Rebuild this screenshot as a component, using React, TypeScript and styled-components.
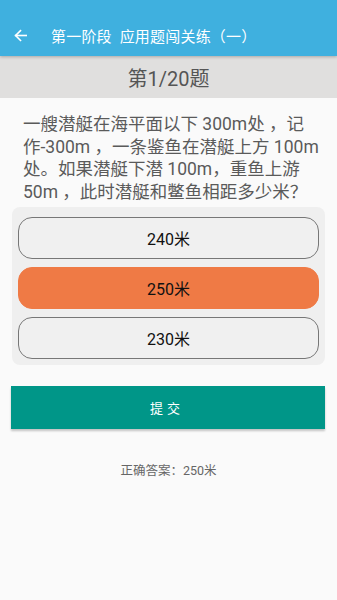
import React from "react";
import styled, { createGlobalStyle } from "styled-components";

const GlobalStyle = createGlobalStyle`
  html, body {
    margin: 0;
    padding: 0;
    background: #fafafa;
  }
  body {
    font-family: Roboto, "Noto Sans CJK SC", "Noto Sans", sans-serif;
  }
`;

const Page = styled.div`
  width: 337px;
  min-height: 600px;
  background: #fafafa;
  display: flex;
  flex-direction: column;
`;

const AppBar = styled.header`
  height: 56px;
  padding-top: 15px;
  box-sizing: border-box;
  background: #3fb0df;
  display: flex;
  align-items: center;
  color: #fff;
  position: relative;
  z-index: 1;
  box-shadow: 0 1px 3px rgba(0, 0, 0, 0.25);
`;

const BackButton = styled.button`
  width: 40px;
  height: 32px;
  margin-left: 0;
  border: 0;
  padding: 0;
  background: transparent;
  display: flex;
  align-items: center;
  justify-content: center;
  color: #fff;
`;

const Title = styled.h1`
  margin: 0 0 0 11px;
  font-size: 15px;
  font-weight: 400;
  letter-spacing: 0.2px;
`;

const CounterBand = styled.div`
  height: 42px;
  background: #e0dfde;
  display: flex;
  align-items: center;
  justify-content: center;
  font-size: 20px;
  color: #555;
`;

const Question = styled.p`
  margin: 0;
  padding: 15px 10px 0 23px;
  font-size: 17.5px;
  line-height: 22.5px;
  color: #5a5a5a;
  white-space: nowrap;
`;

const OptionCard = styled.div`
  margin: 4px 12px 0 12px;
  padding: 10px 6px 6px 6px;
  background: #efefef;
  border-radius: 8px;
  display: flex;
  flex-direction: column;
  gap: 8px;
`;

const Option = styled.button<{ $selected?: boolean }>`
  height: 42px;
  box-sizing: border-box;
  border-radius: 14px;
  border: 1px solid ${(p) => (p.$selected ? "#ef7a45" : "#777")};
  background: ${(p) => (p.$selected ? "#ef7a45" : "#f0f0f0")};
  color: #111;
  font-family: inherit;
  font-size: 16px;
  display: flex;
  align-items: center;
  justify-content: center;
  padding: 0;
`;

const SubmitButton = styled.button`
  margin: 21px 12px 0 11px;
  height: 43px;
  border: 0;
  background: #009688;
  color: #fff;
  font-family: inherit;
  font-size: 13px;
  letter-spacing: 4px;
  padding-left: 4px;
  box-shadow: 0 2px 2px rgba(0, 0, 0, 0.22);
`;

const Answer = styled.div`
  margin-top: 31px;
  text-align: center;
  font-size: 12.5px;
  color: #666;
`;

const options = ["240米", "250米", "230米"];

export default function App() {
  const selected = 1;
  return (
    <Page>
      <GlobalStyle />
      <AppBar>
        <BackButton aria-label="返回">
          <svg width="13" height="13" viewBox="0 0 16 16" fill="none" stroke="#fff" strokeWidth="2" strokeLinecap="square">
            <path d="M15 8H2" />
            <path d="M8 2L2 8l6 6" />
          </svg>
        </BackButton>
        <Title>第一阶段&nbsp;&nbsp;应用题闯关练（一）</Title>
      </AppBar>
      <CounterBand>第1/20题</CounterBand>
      <Question>
        一艘潜艇在海平面以下 300m处 ，记
        <br />
        作-300m ，一条鉴鱼在潜艇上方 100m
        <br />
        处。如果潜艇下潜 100m，重鱼上游
        <br />
        50m ，此时潜艇和鳖鱼相距多少米？
      </Question>
      <OptionCard>
        {options.map((o, i) => (
          <Option key={o} $selected={i === selected}>
            {o}
          </Option>
        ))}
      </OptionCard>
      <SubmitButton>提交</SubmitButton>
      <Answer>正确答案：250米</Answer>
    </Page>
  );
}
